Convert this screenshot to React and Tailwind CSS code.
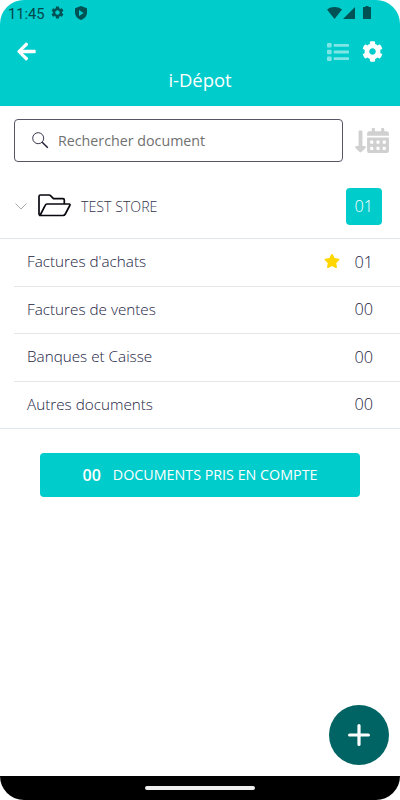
import { FaArrowLeft, FaCog, FaStar, FaCalendarAlt, FaLongArrowAltDown } from 'react-icons/fa';
import { MdSettings } from 'react-icons/md';

const folders = [
  { label: "Factures d'achats", count: '01', starred: true },
  { label: 'Factures de ventes', count: '00' },
  { label: 'Banques et Caisse', count: '00' },
  { label: 'Autres documents', count: '00' },
];

const ListIcon = () => (
  <svg width="22" height="18" viewBox="0 0 22 18" fill="currentColor">
    {[0, 6.7, 13.4].map((y) => (
      <g key={y}>
        <rect x="0" y={y} width="4.6" height="4.6" rx="1" />
        <rect x="6.7" y={y + 0.9} width="15.3" height="2.8" rx="0.6" />
      </g>
    ))}
  </svg>
);

const StatusBar = () => (
  <div className="flex h-[25px] items-center pl-2 pr-[29px] text-[#005254]">
    <span className="mt-[3px] w-[42px] whitespace-nowrap font-['Roboto'] text-[14.7px] leading-none text-[#00484a]">11:45</span>
    <MdSettings className="size-[15px]" />
    <svg className="ml-[9.5px]" width="12" height="14" viewBox="0 0 12 14" fill="currentColor" fillRule="evenodd">
      <path d="M6 0 12 2.2v4.3C12 10 9.500 12.900 6 14 2.500 12.900 0 10 0 6.500V2.200ZM4 4v6l4.600-3Z" />
    </svg>
    <div className="ml-auto flex items-center">
      <svg width="15" height="12" viewBox="0 0 15 12" fill="currentColor">
        <path d="M0 2.500C4.300-.8 10.700-.8 15 2.500L7.500 12Z" />
      </svg>
      <svg className="ml-[1.5px]" width="12" height="12" viewBox="0 0 12 12" fill="currentColor">
        <path d="M12 0v12H0Z" />
      </svg>
      <svg className="ml-2" width="8" height="13" viewBox="0 0 8 13" fill="currentColor">
        <path d="M2.500 0h3v1H8v12H0V1h2.500Z" />
      </svg>
    </div>
  </div>
);

const Header = () => (
  <header className="h-[106px] shrink-0 bg-[#00cccc]">
    <StatusBar />
    <div className="flex h-[53px] items-center pl-4 pr-[17px] text-white">
      <FaArrowLeft className="size-[21px]" />
      <div className="ml-auto flex items-center gap-[13px]">
        <span className="text-[#80e5e5]"><ListIcon /></span>
        <FaCog className="size-[21px]" />
      </div>
    </div>
    <h1 className="-mt-[12px] text-center text-[18.4px] leading-[27px] text-white">i-Dépot</h1>
  </header>
);

const SearchBar = () => (
  <div className="flex items-center pl-[14px] pr-[11px] pt-[13px]">
    <div className="flex h-[43px] w-[329px] items-center rounded-[4px] border border-[#555566] pl-[17px]">
      <svg width="17" height="17" viewBox="0 0 17 17" fill="none" stroke="#22223a">
        <circle cx="6.200" cy="6.200" r="5.500" strokeWidth="0.900" />
        <path d="m10.200 10.200 5.600 5.600" strokeWidth="1.500" />
      </svg>
      <span className="ml-[9px] text-[14.25px] text-[#707070]">Rechercher document</span>
    </div>
    <div className="ml-auto flex items-center text-[#d0d0d0]">
      <FaLongArrowAltDown className="-mr-px mt-px h-[25px] w-[15px]" />
      <FaCalendarAlt className="-mt-px h-[25px] w-[22px]" />
    </div>
  </div>
);

const StoreRow = () => (
  <div className="flex h-[77px] items-center border-b border-[#dfe5ee] pl-[15px] pr-[18px] pt-[13px]">
    <svg width="12" height="7" viewBox="0 0 12 7" fill="none" stroke="#aaa">
      <path d="m.5.5 5.500 5.500L11.500.5" />
    </svg>
    <svg className="-mt-[3px] ml-[11px]" width="33" height="23" viewBox="0 0 33 23" fill="none" stroke="#08080f" strokeWidth="1.7" strokeLinejoin="round">
      <path d="M2 21.500Q1 21 1 20V2.500Q1 1 2.500 1H11Q12 1 12.800 1.900L15.500 4.700H25Q26.300 4.700 26.300 6V10" />
      <path d="M2 21.500 7.200 11.300Q7.800 10 9 10H31Q32.500 10 31.800 11.500L27.300 20Q26.500 21.500 25 21.500Z" />
    </svg>
    <span className="ml-[10px] text-[14.2px] font-light text-[#33334d]">TEST STORE</span>
    <span className="ml-auto flex size-[36.5px] items-center justify-center rounded-[4px] bg-[#00cccc] text-[16.3px] font-light text-white">01</span>
  </div>
);

const FolderRow = ({ folder }) => (
  <li className="ml-[14px] flex h-[47.500px] items-center border-b border-[#e6e6e9] pb-[0.8px] pl-[13px] pr-[27px] text-[#22223f] last:ml-0 last:border-[#e0e9ef] last:pl-[27px]">
    <span className="text-[15.25px] font-light">{folder.label}</span>
    {folder.starred && <FaStar className="-mt-px ml-auto mr-[14.5px] size-[16px] text-[#ffd600]" />}
    <span className={folder.starred ? 'text-[16.3px] font-light' : 'ml-auto text-[16.3px] font-light'}>{folder.count}</span>
  </li>
);

export default function App() {
  return (
    <div className="h-[800px] w-[400px] bg-white">
      <div className="relative flex h-full flex-col overflow-hidden rounded-[24px] bg-white font-['Open_Sans',sans-serif]">
        <Header />
        <SearchBar />
        <StoreRow />
        <ul>
          {folders.map((folder) => (
            <FolderRow key={folder.label} folder={folder} />
          ))}
        </ul>
        <button className="mx-auto mt-6 flex h-[44px] w-[320px] items-center justify-center rounded-[4px] bg-[#00cccc] pb-px text-[14.3px] text-white">
          <span className="mr-[12px] text-[16px] font-semibold">00</span>
          DOCUMENTS PRIS EN COMPTE
        </button>
        <button className="absolute bottom-[35px] right-[11px] flex size-[60px] items-center justify-center rounded-full bg-[#006464] text-white">
          <svg width="22" height="22" viewBox="0 0 22 22" stroke="currentColor" strokeWidth="3.200" strokeLinecap="round">
            <path d="M11 1.600v18.800M1.600 11h18.800" />
          </svg>
        </button>
        <div className="mt-auto flex h-6 items-center justify-center bg-black">
          <div className="h-[4px] w-[110px] rounded-full bg-[#eee]" />
        </div>
      </div>
    </div>
  );
}
